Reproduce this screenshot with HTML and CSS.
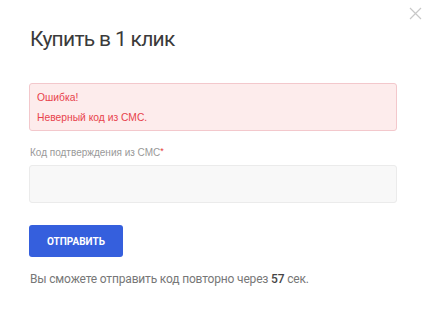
FILE: index.html
```html
<!DOCTYPE html>
<html lang="ru">
<head>
    <meta charset="UTF-8">
    <meta name="viewport" content="width=device-width, initial-scale=1.0">
    <title>Купить в 1 клик</title>
    <link rel="stylesheet" href="styles.css">
</head>
<body>
    <div class="modal">
        <button class="close" aria-label="Закрыть">
            <svg width="13" height="13" viewBox="0 0 13 13">
                <path d="M1 1 L12 12 M12 1 L1 12" stroke="#c8c8c8" stroke-width="1.2" fill="none"/>
            </svg>
        </button>

        <h2 class="title">Купить в 1 клик</h2>

        <div class="alert">
            <div>Ошибка!</div>
            <div>Неверный код из СМС.</div>
        </div>

        <label class="label" for="code">Код подтверждения из СМС<span class="req">*</span></label>
        <input class="field" id="code" type="text">

        <button class="btn">Отправить</button>

        <p class="hint">Вы сможете отправить код повторно через <b>57</b> сек.</p>
    </div>
</body>
</html>
```

FILE: styles.css
```css
body{
    margin: 0;
    background: #ffffff;
    font-family: Roboto, "Liberation Sans", sans-serif;
}

.modal{
    position: relative;
    padding: 26px 35px 0 29px;
}

.close{
    position: absolute;
    top: 6px;
    right: 9px;
    width: 15px;
    height: 15px;
    padding: 0;
    border: none;
    background: transparent;
    display: flex;
    align-items: center;
    justify-content: center;
}

.title{
    margin: 0 0 31px 1px;
    font-size: 21px;
    line-height: 26px;
    font-weight: 400;
    letter-spacing: -0.7px;
    color: #3a3a3a;
}

.alert{
    border: 1px solid #f3c8cc;
    border-radius: 3px;
    background: #fdecec;
    padding: 4px 8px 2px 7px;
    font-family: "Liberation Sans", Arial, sans-serif;
    font-size: 10.3px;
    line-height: 20px;
    color: #e8424b;
}

.label{
    display: block;
    margin: 15px 0 5px 1px;
    font-family: "Liberation Sans", Arial, sans-serif;
    font-size: 10px;
    line-height: 14px;
    color: #999999;
}

.req{
    color: #e53935;
    font-size: 9px;
    vertical-align: top;
    line-height: 10px;
}

.field{
    display: block;
    box-sizing: border-box;
    width: 100%;
    height: 38px;
    margin: 0;
    border: 1px solid #ebebeb;
    border-radius: 3px;
    background: #f8f8f8;
}

.btn{
    display: block;
    margin-top: 22px;
    width: 94px;
    height: 32px;
    padding: 0;
    border: none;
    border-radius: 3px;
    background: #355fdd;
    color: #ffffff;
    font-family: Roboto, sans-serif;
    font-size: 10px;
    font-weight: 700;
    text-transform: uppercase;
}

.hint{
    margin: 14px 0 0 1px;
    font-size: 12px;
    line-height: 16px;
    letter-spacing: -0.17px;
    color: #777777;
}

.hint b{
    font-weight: 500;
    color: #444444;
}
```
